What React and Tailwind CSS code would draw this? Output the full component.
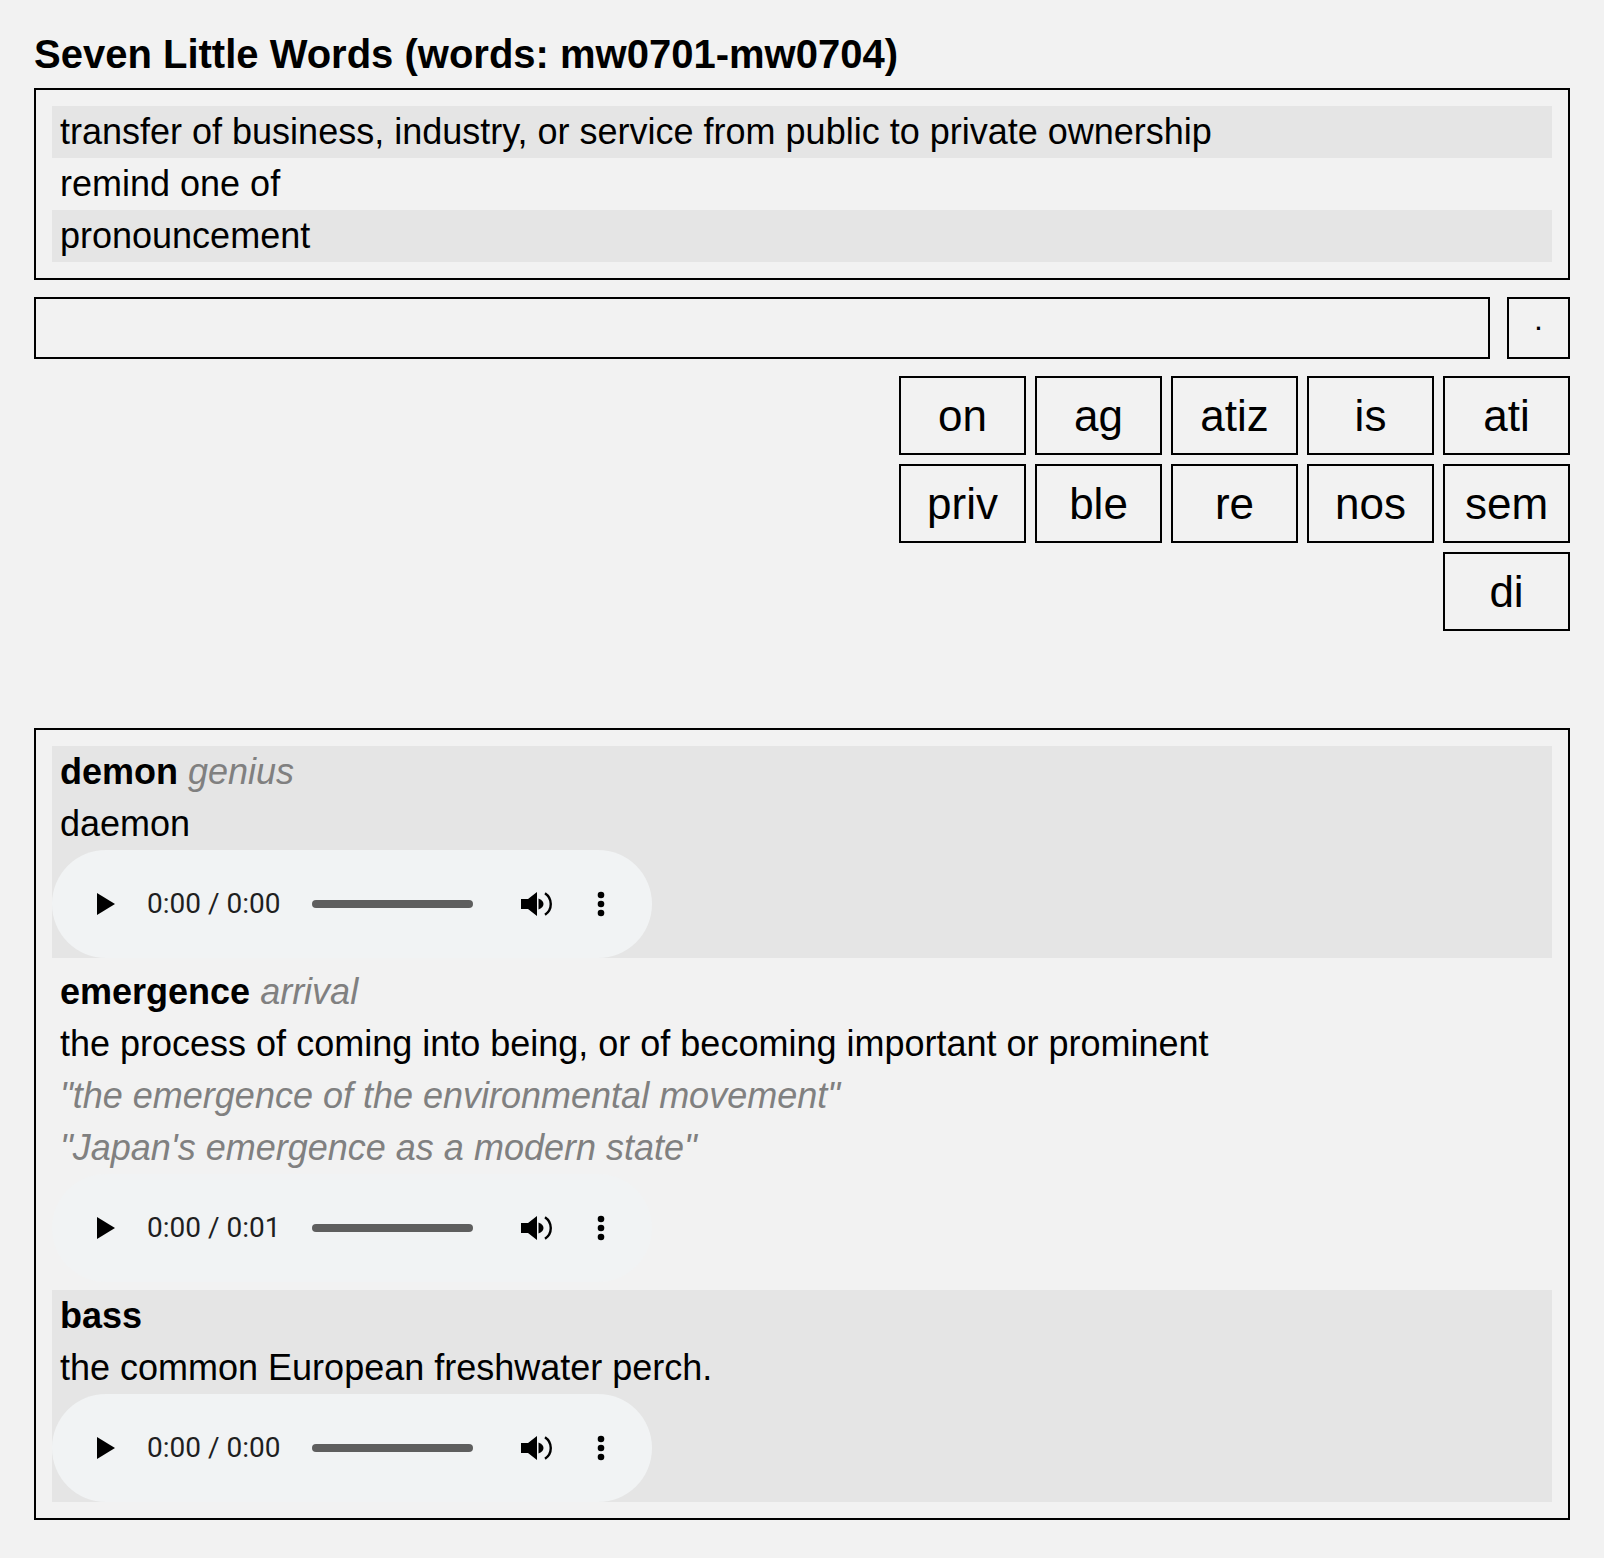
import React from 'react';

const clues = [
  'transfer of business, industry, or service from public to private ownership',
  'remind one of',
  'pronouncement',
];

const tiles = ['on', 'ag', 'atiz', 'is', 'ati', 'priv', 'ble', 're', 'nos', 'sem', 'di'];

function Line({ children, className = '' }) {
  return <div className={`px-2 py-[7px] text-[36px] leading-[38px] ${className}`}>{children}</div>;
}

function AudioBar({ time }) {
  return (
    <div className="flex h-[108px] w-[600px] items-center rounded-full bg-[#f1f3f4] pl-[45px]">
      <svg width="18" height="22" viewBox="0 0 18 22" className="shrink-0">
        <polygon points="0,0 18,11 0,22" fill="#000" />
      </svg>
      <span className="ml-[32px] w-[131px] shrink-0 whitespace-nowrap text-[28px] leading-[32px] text-[#1f1f1f]" style={{ fontFamily: 'Roboto, "Liberation Sans", sans-serif' }}>
        {time}
      </span>
      <div className="ml-[34px] h-[8px] w-[161px] shrink-0 rounded-full bg-[#5e5e5e]" />
      <svg width="32" height="24" viewBox="0 0 32 24" className="ml-[48px] shrink-0">
        <path d="M0 7h7l9-7v24l-9-7H0z" fill="#000" />
        <path d="M17.5 6.5v11c3-1 5-3.2 5-5.5s-2-4.5-5-5.5z" fill="#000" />
        <path d="M24 1.2A13 13 0 0 1 24 22.8" fill="none" stroke="#000" strokeWidth="2.4" />
      </svg>
      <svg width="8" height="26" viewBox="0 0 8 26" className="ml-[44px] shrink-0">
        <circle cx="4" cy="4" r="3.3" fill="#000" />
        <circle cx="4" cy="13" r="3.3" fill="#000" />
        <circle cx="4" cy="22" r="3.3" fill="#000" />
      </svg>
    </div>
  );
}

export default function App() {
  return (
    <div className="min-h-screen bg-[#f2f2f2] px-[34px] pt-[31px] pb-[38px] text-black" style={{ fontFamily: '"Liberation Sans", Arial, sans-serif' }}>
      <h1 className="mb-[11px] text-[40px] font-bold leading-[46px]">Seven Little Words (words: mw0701-mw0704)</h1>

      {/* clues */}
      <div className="border-2 border-black p-4">
        {clues.map((c, i) => (
          <Line key={c} className={i % 2 === 0 ? 'bg-[#e5e5e5]' : ''}>{c}</Line>
        ))}
      </div>

      {/* answer input */}
      <div className="mt-[17px] flex gap-[17px]">
        <input type="text" className="h-[62px] flex-1 border-2 border-black bg-transparent px-2 text-[36px] outline-none" />
        <button className="flex h-[62px] w-[63px] items-center justify-center border-2 border-black pb-[18px] text-[32px] leading-[32px]">.</button>
      </div>

      {/* tiles */}
      <div className="ml-auto mt-[17px] flex w-[671px] flex-wrap justify-end gap-[9px]">
        {tiles.map(t => (
          <div key={t} className="flex h-[79px] w-[127px] items-center justify-center border-2 border-black text-[44px] leading-[50px]">
            {t}
          </div>
        ))}
      </div>

      {/* solved words */}
      <div className="mt-[97px] border-2 border-black p-4">
        <div className="bg-[#e5e5e5]">
          <Line><b>demon</b> <i className="text-[#808080]">genius</i></Line>
          <Line>daemon</Line>
          <AudioBar time="0:00 / 0:00" />
        </div>
        <div className="py-2">
          <Line><b>emergence</b> <i className="text-[#808080]">arrival</i></Line>
          <Line>the process of coming into being, or of becoming important or prominent</Line>
          <Line className="italic text-[#808080]">"the emergence of the environmental movement"</Line>
          <Line className="italic text-[#808080]">"Japan's emergence as a modern state"</Line>
          <AudioBar time="0:00 / 0:01" />
        </div>
        <div className="bg-[#e5e5e5]">
          <Line><b>bass</b></Line>
          <Line>the common European freshwater perch.</Line>
          <AudioBar time="0:00 / 0:00" />
        </div>
      </div>
    </div>
  );
}
